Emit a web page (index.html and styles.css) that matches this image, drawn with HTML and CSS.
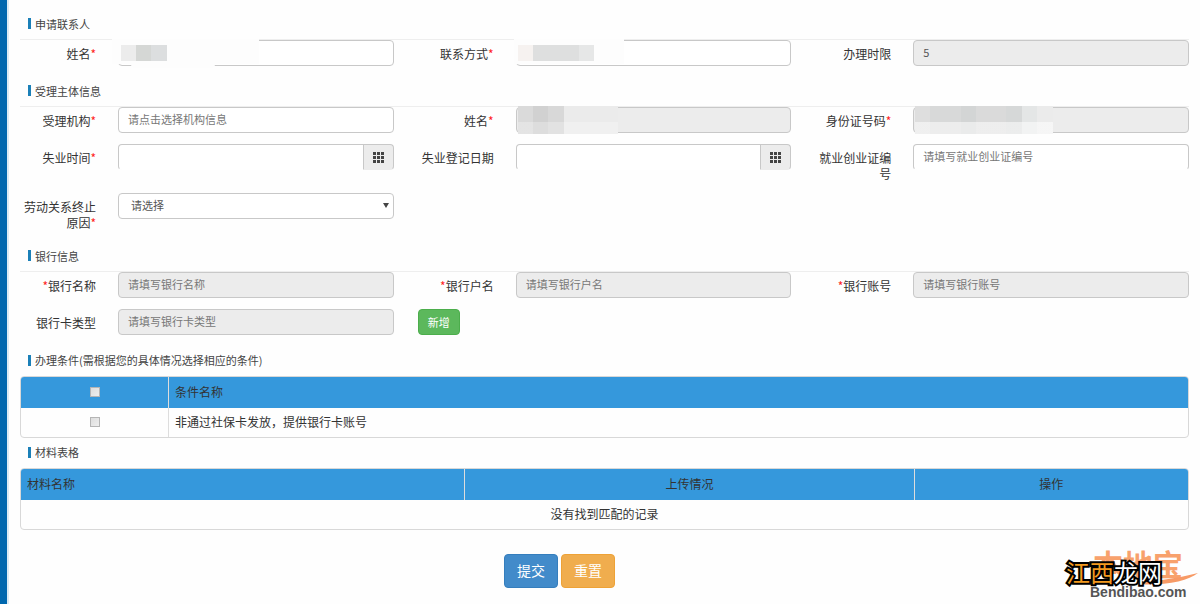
FILE: index.html
```html
<!DOCTYPE html>
<html lang="zh-CN">
<head>
<meta charset="utf-8">
<title>失业申请</title>
<link rel="stylesheet" href="styles.css">
</head>
<body>
<form class="page">
  <section>
    <h2 class="title lined">申请联系人</h2>
    <div class="grid">
      <div class="field">
        <label for="name">姓名<span class="req">*</span></label>
        <div class="control"><input id="name" type="text"><span class="veil veil-name"></span><span class="mask mask-name"></span></div>
      </div>
      <div class="field">
        <label for="phone">联系方式<span class="req">*</span></label>
        <div class="control"><input id="phone" type="text"><span class="veil veil-phone"></span><span class="mask mask-phone"></span></div>
      </div>
      <div class="field">
        <label for="limit">办理时限</label>
        <div class="control"><input id="limit" type="text" value="5" disabled></div>
      </div>
    </div>
  </section>

  <section>
    <h2 class="title lined">受理主体信息</h2>
    <div class="grid">
      <div class="field">
        <label for="org">受理机构<span class="req">*</span></label>
        <div class="control"><input id="org" type="text" placeholder="请点击选择机构信息"></div>
      </div>
      <div class="field">
        <label for="person">姓名<span class="req">*</span></label>
        <div class="control"><input id="person" type="text" disabled><span class="mask mask-person"></span></div>
      </div>
      <div class="field">
        <label for="idno">身份证号码<span class="req">*</span></label>
        <div class="control"><input id="idno" type="text" disabled><span class="mask mask-idno"></span></div>
      </div>
      <div class="field open">
        <label for="lost">失业时间<span class="req">*</span></label>
        <div class="control group"><input id="lost" type="text"><button type="button" class="addon" aria-label="选择失业时间"><svg width="11" height="11" viewBox="0 0 11 11"><path d="M0 0h3v3H0zM4 0h3v3H4zM8 0h3v3H8zM0 4h3v3H0zM4 4h3v3H4zM8 4h3v3H8zM0 8h3v3H0zM4 8h3v3H4zM8 8h3v3H8z"/></svg></button></div>
      </div>
      <div class="field open">
        <label for="reg">失业登记日期</label>
        <div class="control group"><input id="reg" type="text"><button type="button" class="addon" aria-label="选择登记日期"><svg width="11" height="11" viewBox="0 0 11 11"><path d="M0 0h3v3H0zM4 0h3v3H4zM8 0h3v3H8zM0 4h3v3H0zM4 4h3v3H4zM8 4h3v3H8zM0 8h3v3H0zM4 8h3v3H4zM8 8h3v3H8z"/></svg></button></div>
      </div>
      <div class="field open">
        <label for="cert">就业创业证编号</label>
        <div class="control"><input id="cert" type="text" placeholder="请填写就业创业证编号"></div>
      </div>
      <div class="field">
        <label for="reason">劳动关系终止原因<span class="req">*</span></label>
        <div class="control select"><select id="reason"><option>请选择</option></select></div>
      </div>
    </div>
  </section>

  <section>
    <h2 class="title lined">银行信息</h2>
    <div class="grid">
      <div class="field">
        <label for="bank"><span class="req">*</span>银行名称</label>
        <div class="control"><input id="bank" type="text" placeholder="请填写银行名称" disabled></div>
      </div>
      <div class="field">
        <label for="holder"><span class="req">*</span>银行户名</label>
        <div class="control"><input id="holder" type="text" placeholder="请填写银行户名" disabled></div>
      </div>
      <div class="field">
        <label for="account"><span class="req">*</span>银行账号</label>
        <div class="control"><input id="account" type="text" placeholder="请填写银行账号" disabled></div>
      </div>
      <div class="field">
        <label for="card">银行卡类型</label>
        <div class="control"><input id="card" type="text" placeholder="请填写银行卡类型" disabled></div>
      </div>
      <div class="field"><button type="button" class="btn add">新增</button></div>
    </div>
  </section>

  <section>
    <h2 class="title">办理条件(需根据您的具体情况选择相应的条件)</h2>
    <table class="table">
      <colgroup><col class="col-check"><col></colgroup>
      <thead><tr><th class="center"><input type="checkbox" aria-label="全选"></th><th>条件名称</th></tr></thead>
      <tbody><tr><td class="center"><input type="checkbox" id="cond"></td><td><label for="cond">非通过社保卡发放，提供银行卡账号</label></td></tr></tbody>
    </table>
  </section>

  <section>
    <h2 class="title">材料表格</h2>
    <table class="table">
      <colgroup><col class="col-material"><col class="col-upload"><col></colgroup>
      <thead><tr><th>材料名称</th><th class="center">上传情况</th><th class="center">操作</th></tr></thead>
      <tbody><tr><td class="center" colspan="3">没有找到匹配的记录</td></tr></tbody>
    </table>
  </section>

  <div class="actions">
    <button type="submit" class="btn submit">提交</button>
    <button type="reset" class="btn reset">重置</button>
  </div>
</form>

<div class="watermark">
  <span class="wm-back">本地宝</span>
  <svg class="wm-swoosh" width="106" height="16" viewBox="0 0 106 16"><path d="M6 9C35 13 75 9 105 1C91 12 60 16 6 9z" fill="#f79a66"/></svg>
  <span class="wm-front"><b>江西</b>龙网</span>
  <span class="wm-url">Bendibao.com</span>
</div>
</body>
</html>
```
FILE: styles.css
```css
* { box-sizing: border-box; }

body {
  margin: 0;
  min-height: 100vh;
  position: relative;
  background: #fefefe;
  color: #333;
  font: 12px/16px "Noto Sans CJK SC", sans-serif;
  border-left: 7px solid #0067ae;
  overflow-x: hidden;
}

.page {
  min-height: 100vh;
  padding: 10px 11px 14px;
  border-left: 2px solid #dbeaf4;
}

input, select, button { font-family: inherit; margin: 0; }

.title {
  display: flex;
  align-items: center;
  gap: 4px;
  height: 30px;
  margin: 0;
  padding: 0 0 2px 8px;
  font-size: 11px;
  font-weight: 400;
  color: #444;
}
.title::before {
  content: "";
  width: 3px;
  height: 11px;
  background: #1b80b8;
}
.lined { border-bottom: 1px solid #eee; }

.grid {
  display: grid;
  grid-template-columns: repeat(3, minmax(0, 1fr));
  column-gap: 24px;
}
.field {
  display: flex;
  align-items: flex-start;
  gap: 22px;
  padding-bottom: 11px;
}
.field label {
  flex: 0 0 76px;
  padding-top: 6px;
  text-align: right;
}
.req { color: #f22; }

.control {
  position: relative;
  display: flex;
  flex: 1;
  min-width: 0;
}
.control input, .control select {
  width: 100%;
  min-width: 0;
  height: 26px;
  padding: 0 9px 2px;
  border: 1px solid #c8c8c8;
  border-radius: 4px;
  background: #fff;
  color: #555;
  font-size: 11px;
}
.control input::placeholder { color: #777; opacity: 1; }
.control input:disabled { background: #ececec; }
.open .control input, .open .addon { border-bottom-color: transparent; }

.control select {
  appearance: none;
  padding-left: 12px;
}
.select::after {
  content: "";
  position: absolute;
  right: 5px;
  top: 10px;
  border: 3px solid transparent;
  border-top: 5px solid #444;
  border-bottom: 0;
}

.group input { border-radius: 4px 0 0 4px; }
.addon {
  flex: 0 0 30px;
  height: 26px;
  padding: 0;
  display: flex;
  align-items: center;
  justify-content: center;
  border: 1px solid #c8c8c8;
  border-left: 0;
  border-radius: 0 4px 4px 0;
  background: #ececec;
}
.addon svg { fill: #444; }

/* hidden personal data */
.veil, .mask { position: absolute; }
.veil { background: #fdfdfd; }
.veil-name { left: -6px; top: -1px; width: 147px; height: 25px; }
.veil-name::after {
  content: "";
  position: absolute;
  left: 19px;
  top: 25px;
  width: 84px;
  height: 4px;
  background: #fdfdfd;
  border-radius: 0 0 42px 42px;
}
.veil-phone { left: -2px; top: -1px; width: 110px; height: 25px; }
.mask-name {
  left: 3px; top: 5px; width: 46px; height: 16px;
  background: linear-gradient(90deg, #ececec 15px, #d5d7d5 15px 30px, #dcdedf 30px);
}
.mask-phone {
  left: 2px; top: 5px; width: 76px; height: 16px;
  background: linear-gradient(90deg, #f6f2f0 15px, #dedfdf 15px 61px, #e6e7e7 61px);
}
.mask-person {
  left: 2px; top: -1px; width: 100px; height: 28px;
  background:
    linear-gradient(transparent 16px, #ffffff44 16px),
    linear-gradient(90deg, #dadada 15px, #d1d1d1 15px 30px, #d8d8d8 30px 46px, #ebebeb 46px);
}
.mask-idno {
  left: 2px; top: -1px; width: 138px; height: 28px;
  background:
    linear-gradient(transparent 16px, #ffffff88 16px),
    linear-gradient(90deg, #dedede 15px, #d8d9d9 15px 46px, #d3d5d5 46px 61px, #dadada 61px 91px, #d6d8d8 91px 107px, #e4e6e6 107px 122px, #ebebeb 122px);
}

.btn {
  border: 1px solid;
  border-radius: 4px;
  color: #fff;
}
.add {
  height: 26px;
  padding: 0 9px 1px;
  background: #5cb85c;
  border-color: #4cae4c;
  font-size: 11px;
}

.table {
  width: 100%;
  table-layout: fixed;
  border-collapse: separate;
  border-spacing: 0;
  border: 1px solid #d8d8d8;
  border-radius: 4px;
  overflow: hidden;
}
.table th, .table td {
  height: 29px;
  padding: 0 6px 2px;
  text-align: left;
  font-weight: 400;
}
.table th {
  height: 31px;
  background: #3598dc;
}
.table th + th, .table td + td { border-left: 1px solid #ddd; }
.table .center { text-align: center; }
.col-check { width: 147px; }
.col-material { width: 38%; }
.col-upload { width: 38.5%; }

.table input {
  appearance: none;
  display: inline-block;
  width: 10px;
  height: 10px;
  border: 1px solid #b5b5b5;
  background: linear-gradient(135deg, #ddd, #eee);
}

.actions {
  display: flex;
  justify-content: center;
  gap: 3px;
  padding: 24px 90px 0 0;
}
.actions .btn {
  height: 34px;
  padding: 0 12px 2px;
  font-size: 14px;
}
.submit { background: #428bca; border-color: #357ebd; }
.reset { background: #f0ad4e; border-color: #eea236; }

/* site marks lying over the page corner */
.watermark {
  position: absolute;
  right: 0;
  bottom: 0;
  width: 136px;
  height: 58px;
  pointer-events: none;
}
.watermark > * { position: absolute; white-space: nowrap; }
.wm-back {
  left: 29px;
  top: 0;
  color: #f8a16c;
  font-size: 30px;
  line-height: 34px;
  font-weight: 700;
}
.wm-swoosh { left: 29px; top: 26px; }
.wm-front {
  left: 2px;
  top: 10px;
  color: #fff;
  font-size: 24px;
  line-height: 32px;
  font-weight: 400;
  -webkit-text-stroke: 4px #000;
  paint-order: stroke fill;
}
.wm-front b { color: #f39a1f; font-weight: 400; }
.wm-url {
  left: 26px;
  top: 38px;
  color: #555;
  font: 700 14px/16px "Liberation Sans", Arial, sans-serif;
}
```
